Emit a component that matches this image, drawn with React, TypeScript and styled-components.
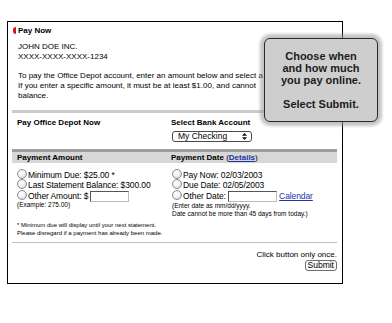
import React from "react";
import styled, { createGlobalStyle } from "styled-components";

const GlobalStyle = createGlobalStyle`
  html, body {
    margin: 0;
    padding: 0;
    background: #fff;
  }
  body {
    font-family: "Liberation Sans", Arial, sans-serif;
    color: #000;
  }
`;

const Page = styled.div`
  position: relative;
  width: 392px;
  height: 323px;
  padding: 21px 0 0 7px;
  box-sizing: border-box;
`;

const Frame = styled.div`
  width: 336px;
  height: 263px;
  box-sizing: border-box;
  border: 1px solid #000;
  padding: 0 5px 0 4px;
  overflow: hidden;
`;

const Title = styled.div`
  display: flex;
  align-items: center;
  gap: 2px;
  height: 10px;
  margin-top: 3px;
  padding-left: 1px;
  font-size: 8px;
  font-weight: bold;
`;

const Marker = styled.span`
  width: 3px;
  height: 7px;
  background: #d4161a;
  border-radius: 3px 0 0 3px;
`;

const Text = styled.p<{ $top: number }>`
  margin: ${({ $top }) => $top}px 0 0;
  padding-left: 6px;
  font-size: 8px;
  line-height: 10px;
  white-space: nowrap;
`;

const Bar = styled.div`
  height: 3px;
  margin-top: 9px;
  background: #cbcbcb;
`;

const Columns = styled.div<{ $top: number }>`
  display: grid;
  grid-template-columns: 154px 1fr;
  margin-top: ${({ $top }) => $top}px;
`;

const Col = styled.div<{ $pad: number }>`
  padding-left: ${({ $pad }) => $pad}px;
`;

const Label = styled.div`
  font-size: 8px;
  font-weight: bold;
  line-height: 10px;
  white-space: nowrap;
`;

const Select = styled.div`
  display: flex;
  align-items: center;
  justify-content: space-between;
  width: 80px;
  height: 11px;
  margin: 3px 0 0 1px;
  padding: 0 4px 0 5px;
  box-sizing: border-box;
  border: 1px solid #4a4a4a;
  border-radius: 3px;
  background: #fff;
  font-size: 8.5px;
  line-height: 9px;
`;

const SectionHead = styled(Columns)`
  border-top: 3px solid #9e9e9e;
  background: #d7d7d7;
  height: 11px;
  font-size: 8px;
  line-height: 11px;
  white-space: nowrap;
`;

const HeadTitle = styled.span`
  font-weight: bold;
`;

const Link = styled.a<{ $bold?: boolean }>`
  color: #2233aa;
  text-decoration: underline;
  font-weight: ${({ $bold }) => ($bold ? "bold" : "normal")};
`;

const RadioRow = styled.div<{ $h: number }>`
  display: flex;
  align-items: center;
  height: ${({ $h }) => $h}px;
  font-size: 8.5px;
  letter-spacing: -0.1px;
  white-space: nowrap;
`;

const Radio = styled.span`
  width: 10px;
  height: 10px;
  margin: -2px 1px 0 0;
  flex-shrink: 0;
  box-sizing: border-box;
  border: 1px solid #8c8c8c;
  border-radius: 50%;
  background: radial-gradient(circle at 40% 35%, #fff 0%, #f2f2f2 45%, #c9c9c9 100%);
`;

const Field = styled.input<{ $w: number }>`
  width: ${({ $w }) => $w}px;
  height: 11px;
  margin: 0 0 0 2px;
  padding: 0;
  box-sizing: border-box;
  border: 1px solid;
  border-color: #555 #bbb #bbb #555;
  background: #fff;
`;

const Note = styled.div<{ $shift?: number }>`
  margin-top: ${({ $shift }) => $shift || 0}px;
  font-size: 6.5px;
  line-height: 8px;
  white-space: nowrap;
`;

const Footnote = styled.div`
  margin-top: 3px;
  padding-left: 5px;
  font-size: 6px;
  line-height: 8px;
`;

const Rule = styled.div`
  margin-top: 5px;
  border-top: 1px solid #c2c2c2;
`;

const SubmitArea = styled.div`
  display: flex;
  flex-direction: column;
  align-items: flex-end;
  margin-top: 7px;
  font-size: 8px;
  line-height: 10px;
`;

const SubmitButton = styled.button`
  height: 11px;
  margin: 0;
  padding: 0 2px;
  border: 1px solid #6e6e6e;
  border-radius: 3px;
  background: #fafafa;
  font-family: "Liberation Sans", Arial, sans-serif;
  font-size: 8.5px;
  line-height: 9px;
  color: #000;
`;

const Callout = styled.div`
  position: absolute;
  left: 264px;
  top: 38px;
  width: 114px;
  height: 84px;
  box-sizing: border-box;
  padding-top: 11px;
  border: 1px solid #34281c;
  border-radius: 6px;
  background: #cecece;
  box-shadow: 0 0 3px 4px rgba(150, 150, 150, 0.55);
  text-align: center;
  font-size: 11px;
  font-weight: bold;
  line-height: 12px;
  color: #1c1c1c;
`;

function Arrows() {
  return (
    <svg width="5" height="7" viewBox="0 0 5 7">
      <path d="M2.5 0 L5 2.8 H0 Z M2.5 7 L0 4.2 H5 Z" fill="#111" />
    </svg>
  );
}

export default function App() {
  return (
    <Page>
      <GlobalStyle />
      <Frame>
        <Title>
          <Marker />
          Pay Now
        </Title>
        <Text $top={7}>
          JOHN DOE INC.
          <br />
          XXXX-XXXX-XXXX-1234
        </Text>
        <Text $top={9}>
          To pay the Office Depot account, enter an amount below and select a
          <br />
          If you enter a specific amount, it must be at least $1.00, and cannot
          <br />
          balance.
        </Text>
        <Bar />
        <Columns $top={5}>
          <Col $pad={5}>
            <Label>Pay Office Depot Now</Label>
          </Col>
          <Col $pad={5}>
            <Label>Select Bank Account</Label>
            <Select>
              My Checking
              <Arrows />
            </Select>
          </Col>
        </Columns>
        <SectionHead $top={7}>
          <Col $pad={5}>
            <HeadTitle>Payment Amount</HeadTitle>
          </Col>
          <Col $pad={5}>
            <HeadTitle>Payment Date</HeadTitle> (<Link $bold>Details</Link>)
          </Col>
        </SectionHead>
        <Columns $top={7}>
          <Col $pad={5}>
            <RadioRow $h={10}>
              <Radio />
              Minimum Due: $25.00 *
            </RadioRow>
            <RadioRow $h={10}>
              <Radio />
              Last Statement Balance: $300.00
            </RadioRow>
            <RadioRow $h={12}>
              <Radio />
              Other Amount: $
              <Field $w={39} readOnly />
            </RadioRow>
            <Note $shift={-1}>(Example: 275.00)</Note>
          </Col>
          <Col $pad={6}>
            <RadioRow $h={10}>
              <Radio />
              Pay Now: 02/03/2003
            </RadioRow>
            <RadioRow $h={10}>
              <Radio />
              Due Date: 02/05/2003
            </RadioRow>
            <RadioRow $h={12}>
              <Radio />
              Other Date:
              <Field $w={49} readOnly />
              &nbsp;<Link>Calendar</Link>
            </RadioRow>
            <Note>
              (Enter date as mm/dd/yyyy.
              <br />
              Date cannot be more than 45 days from today.)
            </Note>
          </Col>
        </Columns>
        <Footnote>
          * Minimum due will display until your next statement.
          <br />
          Please disregard if a payment has already been made.
        </Footnote>
        <Rule />
        <SubmitArea>
          Click button only once.
          <SubmitButton>Submit</SubmitButton>
        </SubmitArea>
      </Frame>
      <Callout>
        Choose when
        <br />
        and how much
        <br />
        you pay online.
        <br />
        <br />
        Select Submit.
      </Callout>
    </Page>
  );
}
